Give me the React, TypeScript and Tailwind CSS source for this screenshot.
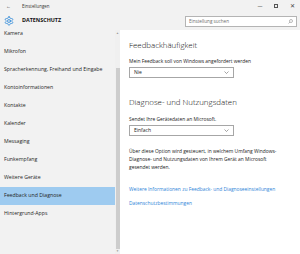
import React from "react";

const items = [
  "Kamera",
  "Mikrofon",
  "Spracherkennung, Freihand und Eingabe",
  "Kontoinformationen",
  "Kontakte",
  "Kalender",
  "Messaging",
  "Funkempfang",
  "Weitere Geräte",
  "Feedback und Diagnose",
  "Hintergrund-Apps",
];

function Gear() {
  return (
    <svg width="10" height="10" viewBox="0 0 24 24" fill="none" stroke="#2b88d8" strokeWidth="2" strokeLinecap="round" strokeLinejoin="round">
      <path d="M12.22 2h-.44a2 2 0 0 0-2 2v.18a2 2 0 0 1-1 1.73l-.43.25a2 2 0 0 1-2 0l-.15-.08a2 2 0 0 0-2.73.73l-.22.38a2 2 0 0 0 .73 2.73l.15.1a2 2 0 0 1 1 1.72v.51a2 2 0 0 1-1 1.74l-.15.09a2 2 0 0 0-.73 2.730l.22.38a2 2 0 0 0 2.73.73l.15-.08a2 2 0 0 1 2 0l.43.25a2 2 0 0 1 1 1.73V20a2 2 0 0 0 2 2h.44a2 2 0 0 0 2-2v-.18a2 2 0 0 1 1-1.73l.43-.25a2 2 0 0 1 2 0l.15.08a2 2 0 0 0 2.73-.73l.22-.39a2 2 0 0 0-.73-2.73l-.15-.08a2 2 0 0 1-1-1.74v-.5a2 2 0 0 1 1-1.74l.15-.09a2 2 0 0 0 .73-2.73l-.22-.38a2 2 0 0 0-2.73-.73l-.15.08a2 2 0 0 1-2 0l-.43-.25a2 2 0 0 1-1-1.73V4a2 2 0 0 0-2-2z" />
      <circle cx="12" cy="12" r="3.5" />
    </svg>
  );
}

function Chevron() {
  return (
    <svg width="5" height="3" viewBox="0 0 10 6" fill="none" stroke="#666" strokeWidth="1.2">
      <path d="M1 1l4 4 4-4" />
    </svg>
  );
}

function Dropdown({ value }: { value: string }) {
  return (
    <div className="flex h-[11px] w-[105px] items-center justify-between border border-[#a6a6a6] bg-white pl-[4px] pr-[4px] text-[5px] text-[#222]">
      <span>{value}</span>
      <Chevron />
    </div>
  );
}

export default function App() {
  return (
    <div
      className="flex h-[254px] w-[300px] flex-col overflow-hidden bg-[#f2f2f2] text-[#1a1a1a]"
      style={{ fontFamily: '"Open Sans", "Noto Sans", sans-serif' }}
    >
      {/* title bar */}
      <div className="flex h-[12px] items-center">
        <span className="ml-[6px] w-[12px] text-[5px] leading-none text-[#333]">←</span>
        <span className="ml-[4px] text-[4.4px] leading-none text-[#333]">Einstellungen</span>
        <div className="ml-auto flex items-center">
          <span className="w-[16px] text-center text-[5px] leading-none text-[#444]">—</span>
          <span className="flex w-[16px] justify-center">
            <span className="block h-[4px] w-[4px] border border-[#555]" />
          </span>
          <span className="w-[16px] text-center text-[6px] leading-none text-[#444]">✕</span>
        </div>
      </div>
      {/* header */}
      <div className="flex h-[18px] items-center">
        <div className="ml-[4px] flex w-[10px] items-center justify-center">
          <Gear />
        </div>
        <span className="ml-[8px] text-[5.4px] font-bold leading-none text-[#111]">DATENSCHUTZ</span>
        <div className="ml-auto mr-[3px] flex h-[11px] w-[112px] items-center justify-between border border-[#b4b4b4] bg-white px-[3px]">
          <span className="text-[4.6px] text-[#6d6d6d]">Einstellung suchen</span>
          <svg width="5" height="5" viewBox="0 0 10 10" fill="none" stroke="#777" strokeWidth="1">
            <circle cx="6" cy="4" r="3" />
            <path d="M4 6L1 9" />
          </svg>
        </div>
      </div>
      {/* body */}
      <div className="flex min-h-0 flex-1">
        <div className="flex w-[120px] shrink-0">
          <div className="w-[115px] overflow-hidden">
            <div className="-mt-[5px] flex flex-col">
              {items.map((it) => (
                <div
                  key={it}
                  className={`flex h-[18px] items-center whitespace-nowrap pl-[4px] text-[5.2px] text-[#1f1f1f] ${
                    it === "Feedback und Diagnose" ? "bg-[#9ecbf0]" : ""
                  }`}
                >
                  {it}
                </div>
              ))}
            </div>
          </div>
          <div className="flex w-[5px] flex-col items-center bg-[#f0f0f0]">
            <span className="flex h-[6px] items-center text-[3px] leading-none text-[#999]">▲</span>
            <div className="mt-[32px] h-[181px] w-[4px] bg-[#cdcdcd]" />
            <span className="flex h-[5px] items-center text-[3px] leading-none text-[#999]">▼</span>
          </div>
        </div>
        <div className="flex flex-1 flex-col bg-white pl-[9px]">
          <div className="mt-[9px] h-[12px] text-[7.9px] font-light leading-[12px] text-[#111]">Feedbackhäufigkeit</div>
          <div className="mt-[6px] text-[4.9px] leading-[8px] text-[#222]">Mein Feedback soll von Windows angefordert werden</div>
          <div className="mt-[2px]">
            <Dropdown value="Nie" />
          </div>
          <div className="mt-[18px] h-[12px] text-[7.9px] font-light leading-[12px] text-[#111]">Diagnose- und Nutzungsdaten</div>
          <div className="mt-[7px] text-[4.9px] leading-[8px] text-[#222]">Sendet Ihre Gerätedaten an Microsoft.</div>
          <div className="mt-[2px]">
            <Dropdown value="Einfach" />
          </div>
          <div className="mt-[11px] whitespace-nowrap text-[4.9px] leading-[8px] text-[#222]">
            Über diese Option wird gesteuert, in welchem Umfang Windows-
            <br />
            Diagnose- und Nutzungsdaten von Ihrem Gerät an Microsoft
            <br />
            gesendet werden.
          </div>
          <div className="mt-[14px] whitespace-nowrap text-[4.9px] leading-[8px] text-[#2f85d8]">
            Weitere Informationen zu Feedback- und Diagnoseeinstellungen
          </div>
          <div className="mt-[6px] text-[4.9px] leading-[8px] text-[#2f85d8]">Datenschutzbestimmungen</div>
        </div>
      </div>
    </div>
  );
}
